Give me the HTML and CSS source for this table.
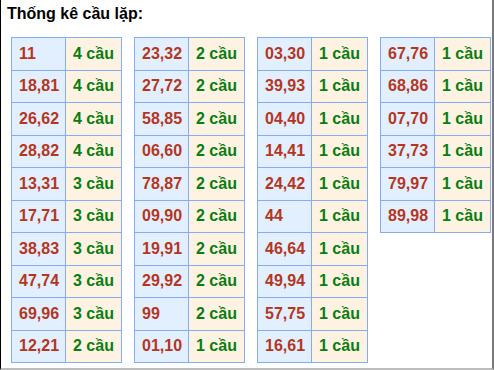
FILE: index.html
```html
<!DOCTYPE html>
<html lang="vi">
<head>
<meta charset="utf-8">
<link rel="stylesheet" href="styles.css">
</head>
<body>
<div class="frame">
  <h2 class="title">Thống kê cầu lặp:</h2>
  <div class="tables">
    <table class="grid">
      <tr><td class="num">11</td><td class="cnt">4 cầu</td></tr>
      <tr><td class="num">18,81</td><td class="cnt">4 cầu</td></tr>
      <tr><td class="num">26,62</td><td class="cnt">4 cầu</td></tr>
      <tr><td class="num">28,82</td><td class="cnt">4 cầu</td></tr>
      <tr><td class="num">13,31</td><td class="cnt">3 cầu</td></tr>
      <tr><td class="num">17,71</td><td class="cnt">3 cầu</td></tr>
      <tr><td class="num">38,83</td><td class="cnt">3 cầu</td></tr>
      <tr><td class="num">47,74</td><td class="cnt">3 cầu</td></tr>
      <tr><td class="num">69,96</td><td class="cnt">3 cầu</td></tr>
      <tr><td class="num">12,21</td><td class="cnt">2 cầu</td></tr>
    </table>
    <table class="grid">
      <tr><td class="num">23,32</td><td class="cnt">2 cầu</td></tr>
      <tr><td class="num">27,72</td><td class="cnt">2 cầu</td></tr>
      <tr><td class="num">58,85</td><td class="cnt">2 cầu</td></tr>
      <tr><td class="num">06,60</td><td class="cnt">2 cầu</td></tr>
      <tr><td class="num">78,87</td><td class="cnt">2 cầu</td></tr>
      <tr><td class="num">09,90</td><td class="cnt">2 cầu</td></tr>
      <tr><td class="num">19,91</td><td class="cnt">2 cầu</td></tr>
      <tr><td class="num">29,92</td><td class="cnt">2 cầu</td></tr>
      <tr><td class="num">99</td><td class="cnt">2 cầu</td></tr>
      <tr><td class="num">01,10</td><td class="cnt">1 cầu</td></tr>
    </table>
    <table class="grid">
      <tr><td class="num">03,30</td><td class="cnt">1 cầu</td></tr>
      <tr><td class="num">39,93</td><td class="cnt">1 cầu</td></tr>
      <tr><td class="num">04,40</td><td class="cnt">1 cầu</td></tr>
      <tr><td class="num">14,41</td><td class="cnt">1 cầu</td></tr>
      <tr><td class="num">24,42</td><td class="cnt">1 cầu</td></tr>
      <tr><td class="num">44</td><td class="cnt">1 cầu</td></tr>
      <tr><td class="num">46,64</td><td class="cnt">1 cầu</td></tr>
      <tr><td class="num">49,94</td><td class="cnt">1 cầu</td></tr>
      <tr><td class="num">57,75</td><td class="cnt">1 cầu</td></tr>
      <tr><td class="num">16,61</td><td class="cnt">1 cầu</td></tr>
    </table>
    <table class="grid">
      <tr><td class="num">67,76</td><td class="cnt">1 cầu</td></tr>
      <tr><td class="num">68,86</td><td class="cnt">1 cầu</td></tr>
      <tr><td class="num">07,70</td><td class="cnt">1 cầu</td></tr>
      <tr><td class="num">37,73</td><td class="cnt">1 cầu</td></tr>
      <tr><td class="num">79,97</td><td class="cnt">1 cầu</td></tr>
      <tr><td class="num">89,98</td><td class="cnt">1 cầu</td></tr>
    </table>
  </div>
</div>
</body>
</html>
```

FILE: styles.css
```css
html, body {
  margin: 0;
  padding: 0;
  background: #fff;
}
body {
  font-family: "Liberation Sans", Arial, sans-serif;
}
.frame {
  box-sizing: border-box;
  width: 494px;
  height: 370px;
  border-left: 1px solid #000;
  border-right: 2px solid #7a7a7a;
  border-bottom: 2px solid #bdbdbd;
  padding: 4px 0 0 6px;
  overflow: hidden;
}
.title {
  margin: 0;
  font-size: 16px;
  font-weight: bold;
  line-height: 20px;
  color: #000;
}
.tables {
  display: flex;
  align-items: flex-start;
  gap: 12px;
  padding: 13px 0 0 4px;
}
.grid {
  border-collapse: collapse;
  width: 110px;
  table-layout: fixed;
  flex: none;
}
.grid td {
  border: 1px solid #86adf3;
  height: 32.5px;
  padding: 0 0 0 7px;
  font-size: 16px;
  font-weight: bold;
  box-sizing: border-box;
  white-space: nowrap;
  overflow: hidden;
}
.grid .num {
  width: 54px;
  background: #e1efff;
  color: #b5361e;
}
.grid .cnt {
  width: 56px;
  background: #fef3e2;
  color: #0a7d12;
}
```
